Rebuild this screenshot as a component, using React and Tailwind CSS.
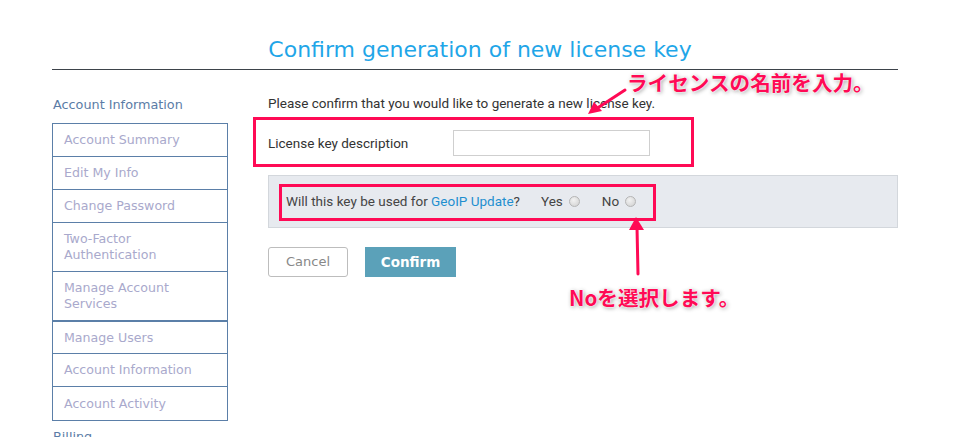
import React from 'react';

const sideItems = [
    { label: 'Account Summary', h: 'h-[33px]' },
    { label: 'Edit My Info', h: 'h-[33px]' },
    { label: 'Change Password', h: 'h-[33px]' },
    { label: 'Two-Factor Authentication', h: 'h-[49px]' },
    { label: 'Manage Account Services', h: 'h-[50px]', thick: true },
    { label: 'Manage Users', h: 'h-[32px]' },
    { label: 'Account Information', h: 'h-[33px]' },
    { label: 'Account Activity', h: 'h-[34px]' },
];

const Radio = () => (
    <span className="inline-block w-[11px] h-[11px] rounded-full border border-[#b5b5b5] bg-[radial-gradient(circle_at_40%_35%,#f2f2f2,#cfcfcf)] ml-[6px]" />
);

const App = () => {
    return (
        <div className="relative w-[962px] h-[437px] overflow-hidden bg-white font-['Roboto',sans-serif]">
            <div className="ml-[52px] w-[846px]">
                <div className="h-[70px] border-b border-[#3d434a] pt-[37px] text-center">
                    <h1 className="text-[22px] leading-[26px] text-[#1fa6e8] font-['DejaVu_Sans',sans-serif] pl-[10px]">
                        Confirm generation of new license key
                    </h1>
                </div>

                <div className="flex">
                    {/* sidebar */}
                    <div className="w-[176px] shrink-0 font-['DejaVu_Sans',sans-serif]">
                        <div className="pt-[27px] pb-[10px] text-[12.8px] leading-[16px] text-[#5b7ca6] pl-[1px]">
                            Account Information
                        </div>
                        <div className="border border-[#5b7fa8] border-b-0">
                            {sideItems.map((item) => (
                                <div
                                    key={item.label}
                                    className={`${item.h} flex items-center pl-[11px] text-[12.6px] leading-[16px] text-[#a9a9cc] ${item.thick ? 'border-b-2' : 'border-b'} border-[#5b7fa8]`}
                                >
                                    <span className="max-w-[150px]">{item.label}</span>
                                </div>
                            ))}
                        </div>
                        <div className="pt-[8px] text-[12.8px] leading-[16px] text-[#5b7ca6] pl-[1px]">Billing</div>
                    </div>

                    {/* main */}
                    <div className="flex-1 ml-[40px]">
                        <p className="pt-[25px] text-[13.5px] leading-[16px] text-[#333]">
                            Please confirm that you would like to generate a new license key.
                        </p>

                        <div className="relative flex items-center h-[26px] mt-[19px]">
                            <div className="absolute left-[-15px] top-[-13px] w-[441px] h-[50px] border-[3px] border-[#ff0a55]" />
                            <span className="w-[185px] text-[13.5px] text-[#333]">License key description</span>
                            <input className="w-[197px] h-[26px] border border-[#cfcfcf] bg-white" />
                        </div>

                        <div className="relative mt-[19px] h-[53px] bg-[#e7eaef] border border-[#d3d7dc] flex items-center pl-[17px] text-[13.5px] text-[#444]">
                            <div className="absolute left-[10px] top-[8px] w-[377px] h-[37px] border-[3px] border-[#ff0a55]" />
                            <span>
                                Will this key be used for <span className="text-[#1f8fcf]">GeoIP Update</span>?
                            </span>
                            <span className="ml-[21px] flex items-center">Yes<Radio /></span>
                            <span className="ml-[22px] flex items-center">No<Radio /></span>
                        </div>

                        <div className="flex gap-[17px] mt-[19px] font-['DejaVu_Sans',sans-serif]">
                            <button className="w-[80px] h-[30px] border border-[#bdbdbd] rounded-[3px] text-[13px] text-[#888] bg-white">
                                Cancel
                            </button>
                            <button className="w-[91px] h-[30px] bg-[#5ba1b9] text-[13.5px] font-bold text-white">
                                Confirm
                            </button>
                        </div>
                    </div>
                </div>
            </div>

            {/* annotations */}
            <div className="absolute left-[627px] top-[68px] text-[20.6px] leading-[28px] font-bold text-[#ff0a55] font-['Noto_Sans_CJK_JP',sans-serif] [text-shadow:0_0_2px_#fff,0_0_2px_#fff,1px_1px_4px_rgba(0,0,0,0.45)] whitespace-nowrap">
                ライセンスの名前を入力。
            </div>
            <svg className="absolute left-[580px] top-[80px]" width="60" height="40" viewBox="0 0 60 40">
                <line x1="45" y1="10" x2="16" y2="29" stroke="#ff0a55" strokeWidth="3" strokeLinecap="round" />
                <polygon points="8,34 14,22 22,31" fill="#ff0a55" />
            </svg>

            <div className="absolute left-[569px] top-[283px] text-[20.6px] leading-[28px] font-bold text-[#ff0a55] font-['Noto_Sans_CJK_JP',sans-serif] [text-shadow:0_0_2px_#fff,0_0_2px_#fff,1px_1px_4px_rgba(0,0,0,0.45)] whitespace-nowrap">
                Noを選択します。
            </div>
            <svg className="absolute left-[624px] top-[215px]" width="24" height="64" viewBox="0 0 24 64">
                <line x1="13" y1="12" x2="14" y2="59" stroke="#ff0a55" strokeWidth="3" strokeLinecap="round" />
                <polygon points="12,2 5,15 20,15" fill="#ff0a55" />
            </svg>
        </div>
    );
};

export default App;
